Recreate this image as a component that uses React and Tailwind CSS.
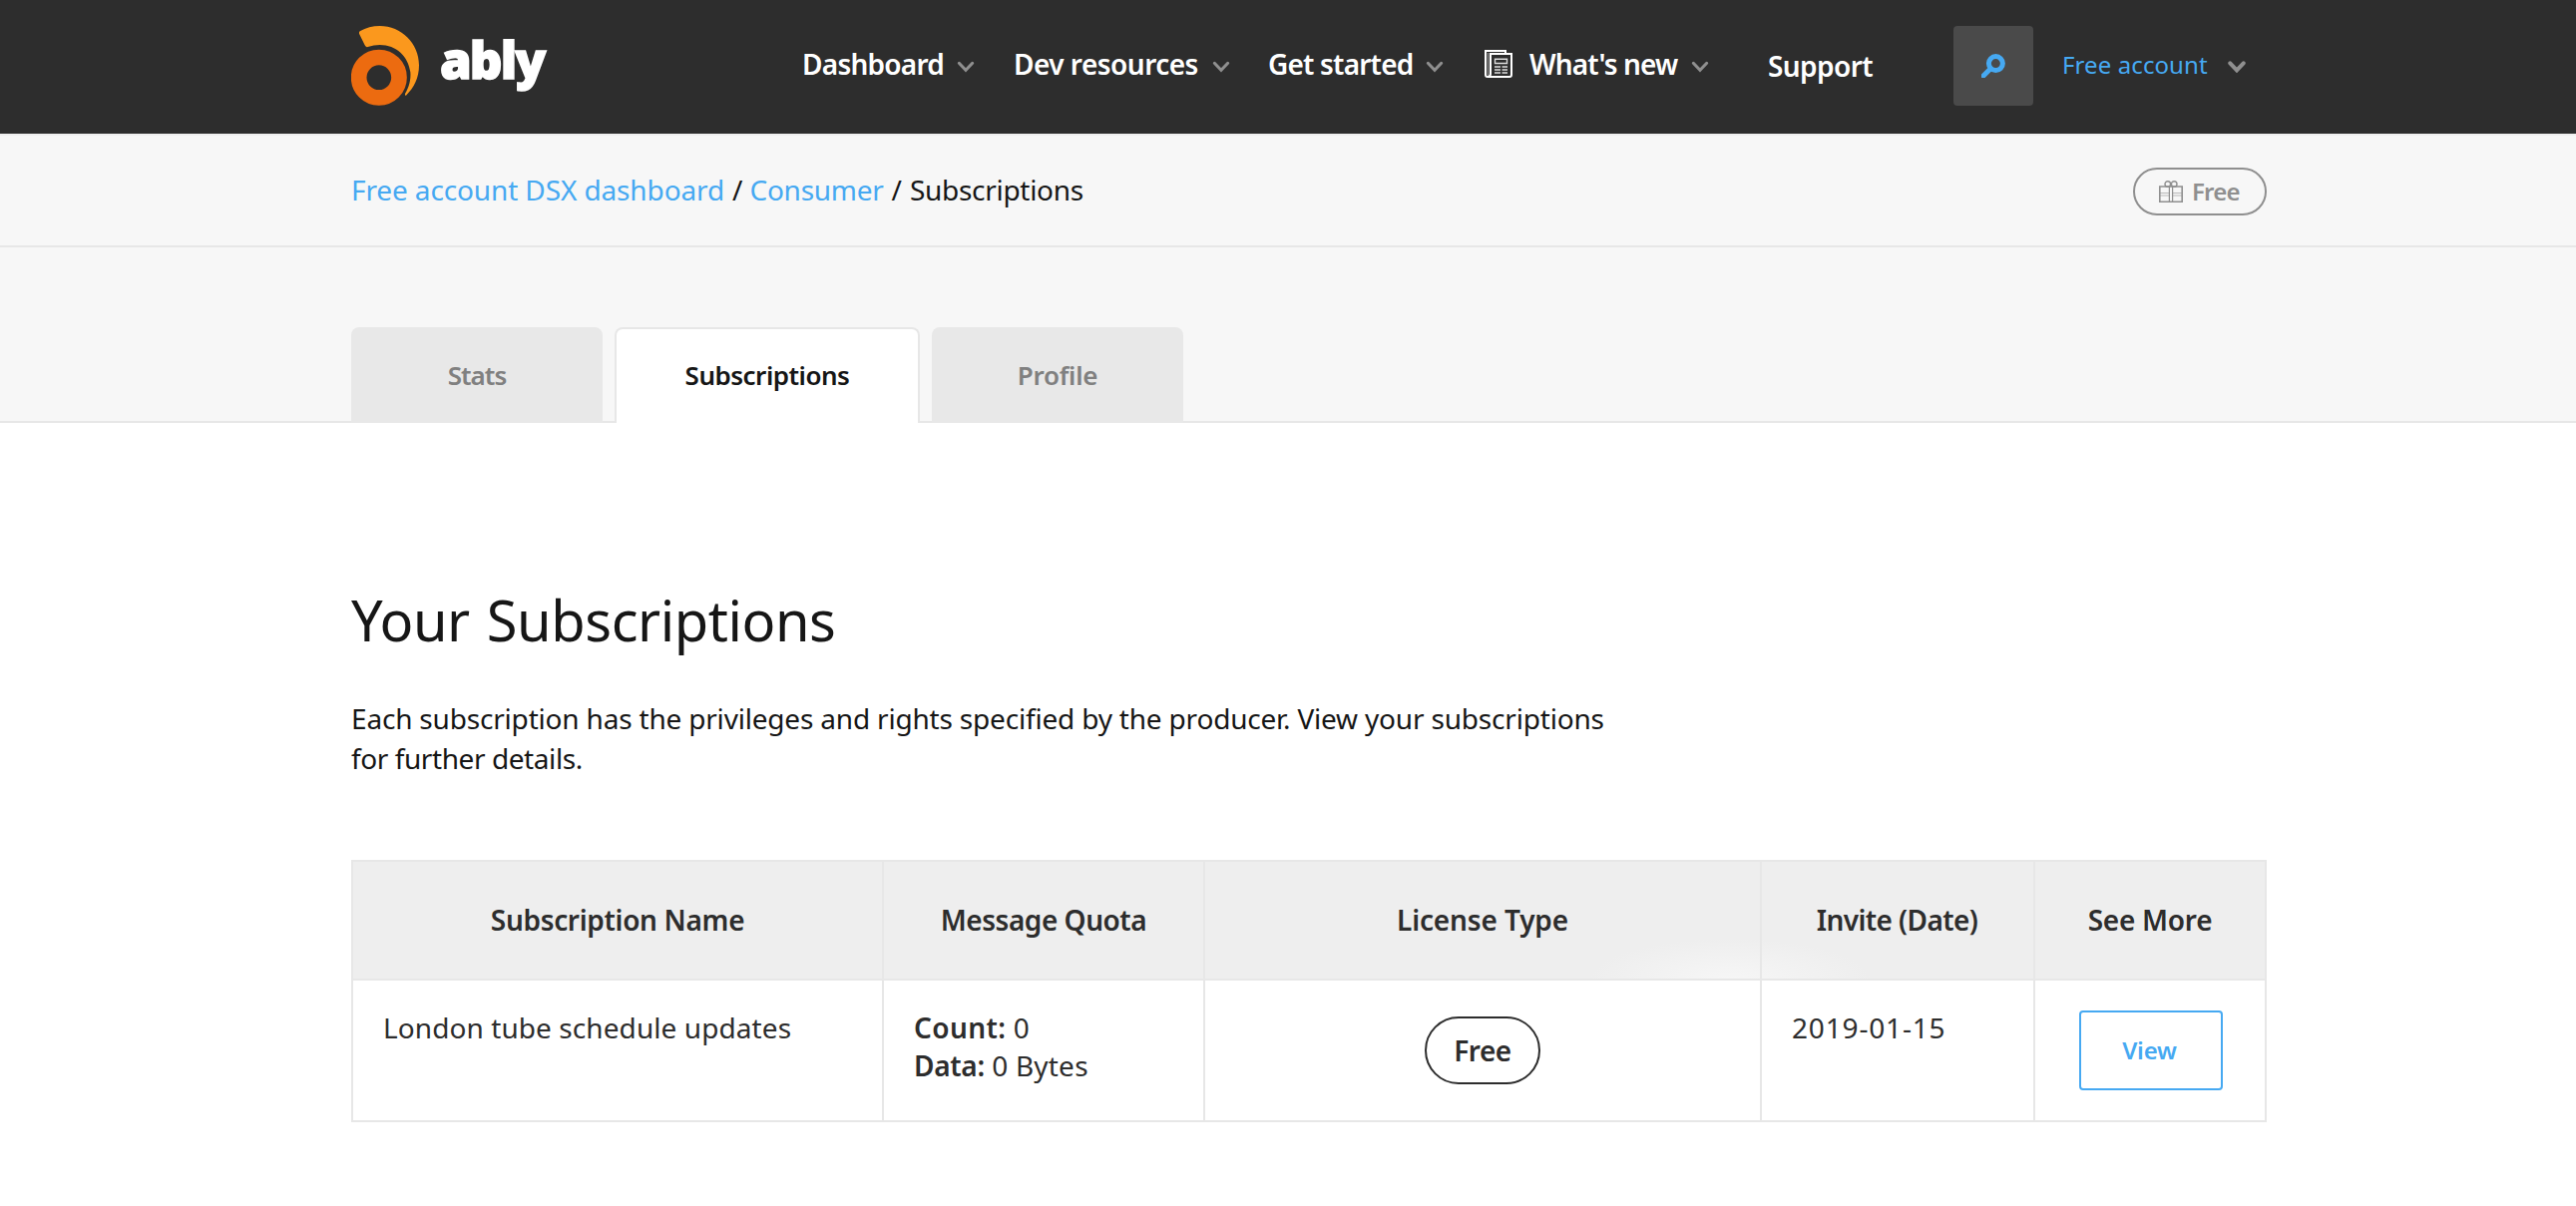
import React from "react";

function Chevron({ className = "", stroke = 3 }) {
  return (
    <svg className={"h-[12px] w-[18px] " + className} viewBox="0 0 18 12" fill="none">
      <path d="M2.3 2.3 9 9.4 15.7 2.3" stroke="#8f8f8f" strokeWidth={stroke} strokeLinecap="round" />
    </svg>
  );
}

function Logo() {
  return (
    <a className="flex h-[134px] w-[452px] items-start">
      <svg className="mt-[26px] h-20 w-[68px]" viewBox="36 78 204 240">
        <path
          fill="#fb981d"
          d="M62 94Q90 78 122 78C187 78 240 130 240 196C240 234 225 264 201 287Q197 289 198 282C210 262 216 240 214 217C208 170 172 135 122 135Q104 135 86 141Q80 143 77 136L60 101Q59 96 62 94Z"
        />
        <circle cx="119.5" cy="233" r="60.5" fill="none" stroke="#ec6b10" strokeWidth="47" />
      </svg>
      <span className="ml-[21px] mt-[29px] text-[51px] font-black leading-[60px] tracking-[-1.9px] text-white [-webkit-text-stroke:1.5px_white] [stroke-linejoin:round]">
        ably
      </span>
    </a>
  );
}

function Newspaper() {
  return (
    <svg className="mr-[17px] h-7 w-7" viewBox="0 0 28 28" fill="none">
      <path d="M21 4V1H1V25Q1 27 3 27H25Q27 27 27 25V4H6V24Q6 26.5 3.5 26.5" stroke="#fff" strokeWidth="2" />
      <path d="M3.5 3V25" stroke="#8f8f8f" strokeWidth="1.4" />
      <path d="M10.5 9.2H22.5V13.5H10.5Z" stroke="#ddd" strokeWidth="1.4" />
      <path d="M10 17H16M17.5 17H23M10 20H16M17.5 20H23M10 23H16M17.5 23H23" stroke="#ddd" strokeWidth="1.6" />
    </svg>
  );
}

function Gift() {
  return (
    <svg className="mr-[9px] h-[22px] w-6" viewBox="0 0 24 22" fill="none" stroke="#8f8f8f">
      <path d="M.8 6H23.2V21.2H.8Z" strokeWidth="1.6" />
      <path d="M10.4 6V21M13.6 6V21" strokeWidth="1.2" />
      <path d="M1 12.5H10.4M13.6 12.5H23M1 15H10.4M13.6 15H23" strokeWidth="1" opacity=".6" />
      <circle cx="8.8" cy="3.5" r="2.8" strokeWidth="1.4" />
      <circle cx="15.2" cy="3.5" r="2.8" strokeWidth="1.4" />
    </svg>
  );
}

function Header() {
  return (
    <header className="flex h-[134px] bg-[#2d2d2d] pl-[352px]">
      <Logo />
      <nav className="flex h-[127px] items-center whitespace-nowrap text-[28px] font-semibold text-white">
        <a className="flex w-[212px] items-center">
          <span className="w-[155px] tracking-[-0.75px]">Dashboard</span>
          <Chevron className="mt-1.5" />
        </a>
        <a className="flex w-[255px] items-center">
          <span className="w-[199px] tracking-[-0.52px]">Dev resources</span>
          <Chevron className="mt-1.5" />
        </a>
        <a className="flex w-[217px] items-center">
          <span className="w-[158px] tracking-[-0.81px]">Get started</span>
          <Chevron className="mt-1.5" />
        </a>
        <a className="flex w-[283px] items-center">
          <Newspaper />
          <span className="w-[162px] tracking-[-0.86px]">What's new</span>
          <Chevron className="mt-1.5" />
        </a>
        <a className="w-[187px] pl-px pt-1 tracking-[-0.57px]">Support</a>
      </nav>
      <button className="mt-[26px] flex size-20 items-center justify-center rounded-[4px] bg-[#4a4a4a]">
        <svg className="size-6" viewBox="0 0 24 24" fill="none" stroke="#46a9f2">
          <circle cx="14.4" cy="9.6" r="7" strokeWidth="5" />
          <path d="M9 15 2 22" strokeWidth="5" strokeLinecap="round" />
        </svg>
      </button>
      <a className="ml-[29px] flex h-[130px] items-center text-2xl text-[#46a9f2]">
        <span className="w-[166px] whitespace-nowrap tracking-[0.1px]">Free account</span>
        <Chevron className="mt-1" stroke={4} />
      </a>
    </header>
  );
}

function Breadcrumb() {
  return (
    <div className="flex h-[114px] items-center justify-between border-y-2 border-t-[#efefef] border-b-[#e7e7e7] bg-[#f7f7f7] pl-[352px] pr-[310px]">
      <div className="flex gap-2 whitespace-nowrap pb-[3px] text-[28px] text-[#161616]">
        <a className="tracking-[-0.12px] text-[#46a9f2]">Free account DSX dashboard</a>
        <span>/</span>
        <a className="-ml-px tracking-[-0.26px] text-[#46a9f2]">Consumer</a>
        <span>/</span>
        <span className="tracking-[-0.3px]">Subscriptions</span>
      </div>
      <span className="mt-0.5 flex h-12 w-[134px] items-center rounded-full border-2 border-[#8f8f8f] pl-6 text-2xl font-semibold tracking-[-0.8px] text-[#8f8f8f]">
        <Gift />
        Free
      </span>
    </div>
  );
}

function Tabs() {
  const idle = "flex h-24 w-[252px] items-center justify-center rounded-t-lg bg-[#e8e8e8] text-[#808080]";
  return (
    <div className="flex h-[176px] items-end border-b-2 border-[#e7e7e7] bg-[#f7f7f7] pl-[352px] text-[26px] font-semibold">
      <div className="-mb-0.5 flex gap-3">
        <a className={idle + " tracking-[-1px]"}>Stats</a>
        <a className="flex h-24 w-[306px] items-center justify-center rounded-t-lg border-2 border-b-0 border-[#e7e7e7] bg-white pb-0.5 tracking-[-0.5px] text-[#161616]">
          Subscriptions
        </a>
        <a className={idle + " tracking-[-0.3px]"}>Profile</a>
      </div>
    </div>
  );
}

function SubscriptionsTable() {
  const cell = "border-l-2 border-[#e7e7e7]";
  const head = cell + " flex h-[117px] items-center justify-center pb-px";
  return (
    <div className="mt-[82px] w-[1920px] border-y-2 border-r-2 border-[#e7e7e7] text-[28px] text-[#2d2d2d]">
      <div className="grid grid-cols-[532px_322px_558px_274px_232px] border-b-2 border-[#e7e7e7] bg-[#eeeeee] bg-[radial-gradient(ellipse_140px_40px_at_1382px_100%,#f6f6f6,#eeeeee)] font-semibold">
        <div className={head + " tracking-[-0.32px]"}>Subscription Name</div>
        <div className={head + " tracking-[-0.47px]"}>Message Quota</div>
        <div className={head + " tracking-[-0.13px]"}>License Type</div>
        <div className={head + " pr-px tracking-[-0.6px]"}>Invite (Date)</div>
        <div className={head + " tracking-[-0.26px]"}>See More</div>
      </div>
      <div className="grid h-[140px] grid-cols-[532px_322px_558px_274px_232px] leading-[38px]">
        <div className={cell + " px-[30px] pt-[28px] tracking-[0.08px]"}>London tube schedule updates</div>
        <div className={cell + " px-[30px] pt-[28px]"}>
          <p><b className="font-semibold tracking-[0.4px]">Count:</b> 0</p>
          <p><b className="font-semibold tracking-[-0.3px]">Data:</b> <span className="tracking-[0.22px]">0 Bytes</span></p>
        </div>
        <div className={cell + " flex items-center justify-center"}>
          <span className="flex h-[68px] w-[116px] items-center justify-center rounded-[34px] border-2 border-[#2d2d2d] pb-px font-semibold tracking-[-0.5px]">
            Free
          </span>
        </div>
        <div className={cell + " px-[30px] pt-[28px] tracking-[0.83px]"}>2019-01-15</div>
        <div className={cell + " flex items-center justify-center pl-0.5"}>
          <button className="flex h-20 w-36 items-center justify-center rounded-[4px] border-2 border-[#46a9f2] pb-px pr-[3px] text-2xl font-semibold tracking-[-0.17px] text-[#46a9f2]">
            View
          </button>
        </div>
      </div>
    </div>
  );
}

export default function App() {
  return (
    <div className="min-h-[1209px] w-[2582px] bg-white font-['Noto_Sans',sans-serif]">
      <Header />
      <Breadcrumb />
      <Tabs />
      <main className="pl-[352px] pt-[165px] text-[#161616]">
        <h1 className="text-[56px] leading-[64px] tracking-[-0.45px] [word-spacing:3px]">Your Subscriptions</h1>
        <p className="mt-[47px] text-[28px] leading-10 tracking-[-0.19px]">
          Each subscription has the privileges and rights specified by the producer. View your subscriptions
          <br />
          <span className="tracking-[-0.42px]">for further details.</span>
        </p>
        <SubscriptionsTable />
      </main>
    </div>
  );
}
